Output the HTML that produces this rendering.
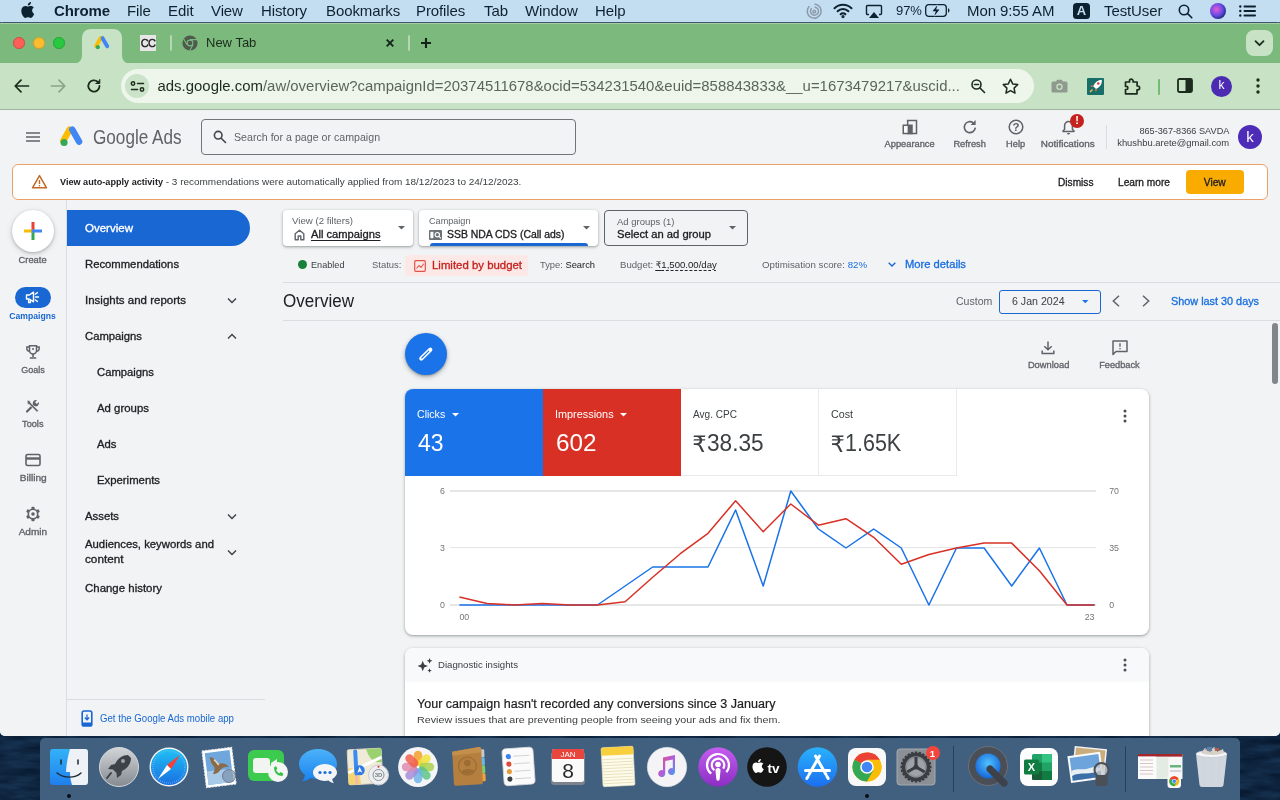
<!DOCTYPE html>
<html><head><meta charset="utf-8"><title>Google Ads</title>
<style>
*{box-sizing:border-box;margin:0;padding:0}
html,body{width:1280px;height:800px;overflow:hidden}
body{font-family:"Liberation Sans",sans-serif;background:#0f2641;position:relative;color:#202124}
.abs{position:absolute}
svg{display:block;position:absolute;overflow:visible}
.t{position:absolute;white-space:nowrap;line-height:1}
#menubar{left:0;top:0;width:1280px;height:22px;background:#c4def1;font-size:15px;color:#0d2231}
#menubar span{position:absolute;top:1px;line-height:20px;white-space:nowrap;letter-spacing:-0.1px}
#win{left:0;top:22px;width:1280px;height:714px;border-radius:3px 3px 5px 5px;overflow:hidden;background:#f1f3f4}
#tabstrip{left:0;top:0;width:1280px;height:42px;background:#7cb97c;box-shadow:inset 0 1px 0 #3f566a,inset 0 2px 0 #a3cfa1}
#toolbar{left:0;top:41px;width:1280px;height:47px;background:#c7e2c4;border-bottom:1px solid #9fb39e}
#page{left:0;top:88px;width:1280px;height:627px;background:#f1f3f4;overflow:hidden}
.g{color:#5f6368}
.b{color:#1a73e8}
.m{font-weight:bold}
#win,#menubar,#dock{will-change:transform}
</style></head><body>
<svg style="left:0;top:730px" width="1280" height="70" viewBox="0 0 1280 70"><filter id="wtr" x="0" y="0" width="100%" height="100%" color-interpolation-filters="sRGB"><feTurbulence type="fractalNoise" baseFrequency="0.03 0.13" numOctaves="3" seed="7"/><feColorMatrix values="0.10 0 0 0 0.010  0.17 0 0 0 0.065  0.22 0 0 0 0.145  0 0 0 0 1"/></filter><rect width="1280" height="70" filter="url(#wtr)"/></svg>
<div id="menubar" class="abs">
<svg style="left:20px;top:1px" width="17" height="18" viewBox="0 0 17 18"><path fill="#0d2231" d="M12.1 9.5c0-2 1.6-2.9 1.7-3-.9-1.400-2.400-1.500-2.900-1.600-1.200-.1-2.400.7-3 .7s-1.600-.7-2.600-.7c-1.300 0-2.600.8-3.300 2-1.400 2.400-.4 6 1 8 .7 1 1.500 2 2.500 2s1.400-.6 2.600-.6 1.500.6 2.600.6 1.800-1 2.400-1.900c.8-1.100 1.100-2.200 1.100-2.200s-2.100-.8-2.100-3.300zM10.200 3.400c.5-.7.900-1.600.8-2.500-.8 0-1.700.5-2.300 1.200-.5.600-.9 1.500-.8 2.400.9.100 1.700-.4 2.300-1.100z"/></svg>
<span style="left:54px;font-weight:bold">Chrome</span>
<span style="left:127px">File</span>
<span style="left:168px">Edit</span>
<span style="left:211px">View</span>
<span style="left:261px">History</span>
<span style="left:326px">Bookmarks</span>
<span style="left:416px">Profiles</span>
<span style="left:484px">Tab</span>
<span style="left:525px">Window</span>
<span style="left:595px">Help</span>
<!-- siri-ish swirl -->
<svg style="left:806px;top:3px" width="16" height="16" viewBox="0 0 16 16" fill="none" stroke="#8a9aa8" stroke-width="1.500" stroke-linecap="round"><path d="M3 3.500A7 7 0 1 0 9 1.200"/><path d="M5.500 5.500A4 4 0 1 0 9 4.200"/><path d="M8 7.300a1.300 1.300 0 1 0 1 .2"/></svg>
<!-- wifi -->
<svg style="left:833px;top:3px" width="20" height="15" viewBox="0 0 20 15" fill="none" stroke="#0d2231" stroke-width="2" stroke-linecap="round"><path d="M1.500 5.200a12 12 0 0 1 17 0"/><path d="M4.600 8.300a7.600 7.600 0 0 1 10.800 0"/><path d="M7.600 11.300a3.400 3.400 0 0 1 4.800 0"/><circle cx="10" cy="13.600" r=".6" fill="#0d2231"/></svg>
<!-- airplay -->
<svg style="left:865px;top:4px" width="18" height="15" viewBox="0 0 18 15"><path d="M4 10.500H2.500a1 1 0 0 1-1-1v-7a1 1 0 0 1 1-1h13a1 1 0 0 1 1 1v7a1 1 0 0 1-1 1H14" fill="none" stroke="#0d2231" stroke-width="1.400"/><path d="M9 8l5 6H4z" fill="#0d2231"/></svg>
<span style="left:896px;font-size:13px;top:1px">97%</span>
<!-- battery -->
<svg style="left:925px;top:4px" width="25" height="13" viewBox="0 0 25 13"><rect x=".7" y=".7" width="20.600" height="11.600" rx="3" fill="none" stroke="#0d2231" stroke-width="1.300"/><path d="M23 4.300v4.400c.9-.3 1.500-1.200 1.500-2.200S23.900 4.600 23 4.300z" fill="#0d2231"/><path d="M12.500 1l-5 6.200h3.300l-1.500 4.800 5.200-6.400h-3.300z" fill="#0d2231" stroke="#c4def1" stroke-width="1.200" paint-order="stroke"/></svg>
<span style="left:967px">Mon 9:55 AM</span>
<div class="abs" style="left:1073px;top:3px;width:17px;height:16px;border-radius:3.500px;background:#0d2231;color:#c4def1;font-size:13px;font-weight:bold;text-align:center;line-height:16px">A</div>
<span style="left:1104px">TestUser</span>
<svg style="left:1178px;top:4px" width="15" height="15" viewBox="0 0 15 15" fill="none" stroke="#0d2231" stroke-width="1.600" stroke-linecap="round"><circle cx="6" cy="6" r="4.700"/><path d="M9.600 9.600l4.200 4.200"/></svg>
<div class="abs" style="left:1210px;top:3px;width:16px;height:16px;border-radius:50%;background:radial-gradient(circle at 40% 40%,#e85bd0 0,#6a4be8 45%,#1b2a7a 75%,#0d1033 100%)"></div>
<svg style="left:1239px;top:5px" width="17" height="12" viewBox="0 0 17 12" fill="#0d2231"><circle cx="1.300" cy="1.500" r="1.200"/><circle cx="1.300" cy="6" r="1.200"/><circle cx="1.300" cy="10.500" r="1.200"/><rect x="4.500" y=".6" width="12.500" height="1.800" rx=".9"/><rect x="4.500" y="5.100" width="12.500" height="1.800" rx=".9"/><rect x="4.500" y="9.600" width="12.500" height="1.800" rx=".9"/></svg>
</div>
<div id="win" class="abs">
<div id="tabstrip" class="abs">
  <div class="abs" style="left:13px;top:15.2px;width:11.6px;height:11.6px;border-radius:50%;background:#fe5f57;border:.5px solid #d8473f"></div>
  <div class="abs" style="left:33.2px;top:15.2px;width:11.6px;height:11.6px;border-radius:50%;background:#febc2e;border:.5px solid #d9a022"></div>
  <div class="abs" style="left:53.2px;top:15.2px;width:11.6px;height:11.6px;border-radius:50%;background:#28c840;border:.5px solid #1fa733"></div>
  <!-- active tab -->
  <svg style="left:72px;top:7px" width="60" height="35" viewBox="0 0 60 35"><path d="M0 35c6 0 10-3 10-9V9c0-5 3-9 9-9h22c6 0 9 4 9 9v17c0 6 4 9 10 9z" fill="#c7e2c4"/></svg>
  <!-- google ads favicon -->
  <svg style="left:94.500px;top:13.700px" width="15.300" height="14.400" viewBox="0 0 17 16"><path d="M6.300 2.200L1.300 11" stroke="#fbbc04" stroke-width="4.400" stroke-linecap="round"/><path d="M8.400 2.400l5.200 9" stroke="#4285f4" stroke-width="4.400" stroke-linecap="round"/><circle cx="3.100" cy="12.400" r="2.300" fill="#34a853"/></svg>
  <div class="abs" style="left:140px;top:13px;width:16px;height:16px;background:#e6e6e6;color:#1a1a1a;font:11px/16px 'Liberation Sans',sans-serif;-webkit-text-stroke:.35px #1a1a1a;text-align:center;letter-spacing:-.8px">CC</div>
  <div class="abs" style="left:170px;top:13px;width:2px;height:16px;background:#b5d6b3;border-radius:1px"></div>
  <!-- chrome grey icon -->
  <svg style="left:182px;top:13px" width="16" height="16" viewBox="0 0 16 16"><circle cx="8" cy="8" r="7.600" fill="#4d5a4d"/><circle cx="8" cy="8" r="3.400" fill="#7cb97c"/><circle cx="8" cy="8" r="2.300" fill="#4d5a4d"/><path d="M8 4.600h7M5 9.700L1.600 3.800M11 9.700l-3.400 6" stroke="#7cb97c" stroke-width="1.100"/></svg>
  <div class="t" style="left:206px;top:14px;font-size:13px;color:#1c2b1c">New Tab</div>
  <svg style="left:386px;top:17px" width="8" height="8" viewBox="0 0 8 8" stroke="#13241a" stroke-width="1.900" stroke-linecap="butt"><path d="M.7 .7l6.600 6.600M7.300 .7L.7 7.300"/></svg>
  <div class="abs" style="left:408px;top:13px;width:2px;height:16px;background:#b5d6b3;border-radius:1px"></div>
  <svg style="left:421px;top:16px" width="10" height="10" viewBox="0 0 10 10" stroke="#13241a" stroke-width="2.100" stroke-linecap="butt"><path d="M5 0v10M0 5h10"/></svg>
  <div class="abs" style="left:1246px;top:8px;width:27px;height:26px;border-radius:8px;background:#c7e2c4"></div>
  <svg style="left:1254px;top:18px" width="11" height="7" viewBox="0 0 11 7" fill="none" stroke="#1c2b1c" stroke-width="1.800" stroke-linecap="round" stroke-linejoin="round"><path d="M1.500 1.200l4 4 4-4"/></svg>
</div>
<div id="toolbar" class="abs">
  <svg style="left:14px;top:16px" width="16" height="14" viewBox="0 0 16 14" fill="none" stroke="#1c2b1c" stroke-width="1.700" stroke-linecap="round" stroke-linejoin="round"><path d="M7 1.200L1.200 7l5.800 5.800M1.500 7h13"/></svg>
  <svg style="left:50px;top:16px" width="16" height="14" viewBox="0 0 16 14" fill="none" stroke="#8aa58a" stroke-width="1.700" stroke-linecap="round" stroke-linejoin="round"><path d="M9 1.200L14.800 7 9 12.800M14.500 7h-13"/></svg>
  <svg style="left:86px;top:15px" width="16" height="16" viewBox="0 0 16 16" fill="none" stroke="#1c2b1c" stroke-width="1.800" stroke-linecap="round"><path d="M13.500 8A5.600 5.600 0 1 1 11.800 4"/><path d="M13.800 1.500v4h-4" fill="#1c2b1c" stroke-linejoin="round" stroke-width="1"/></svg>
  <div class="abs" style="left:120.500px;top:6.200px;width:913.500px;height:33.600px;border-radius:17px;background:#eef6ec"></div>
  <div class="abs" style="left:125.300px;top:11px;width:24px;height:24px;border-radius:50%;background:#cbe3c8"></div>
  <svg style="left:130px;top:17.600px" width="15" height="11" viewBox="0 0 15 11" fill="none" stroke="#1c2b1c" stroke-width="1.500" stroke-linecap="round"><circle cx="3" cy="2.500" r="1.700"/><path d="M7.500 2.500h6"/><circle cx="12" cy="8.500" r="1.700"/><path d="M1.500 8.500h6"/></svg>
  <div class="t" style="left:157.500px;top:16px;font-size:14.900px;color:#5b665b;letter-spacing:.02px"><span style="color:#1c2b1c">ads.google.com</span>/aw/overview?campaignId=20374511678&amp;ocid=534231540&amp;euid=858843833&amp;__u=1673479217&amp;uscid...</div>
  <svg style="left:970px;top:15px" width="16" height="16" viewBox="0 0 16 16" fill="none" stroke="#1c2b1c" stroke-width="1.600" stroke-linecap="round"><circle cx="6.500" cy="6.500" r="4.500"/><path d="M10 10l4.500 4.500M4.500 6.500h4"/></svg>
  <svg style="left:1002px;top:15px" width="17" height="16" viewBox="0 0 17 16" fill="none" stroke="#1c2b1c" stroke-width="1.500" stroke-linejoin="round"><path d="M8.500 1.300l2.200 4.600 5 .7-3.600 3.500.9 5-4.500-2.400L4 15.100l.9-5L1.300 6.600l5-.7z"/></svg>
  <!-- camera -->
  <svg style="left:1051px;top:16px" width="17" height="14" viewBox="0 0 17 14"><path d="M2 2.500h3l1.200-1.700h4.600L12 2.500h3a1.500 1.500 0 0 1 1.500 1.500v8a1.500 1.500 0 0 1-1.500 1.500H2A1.500 1.500 0 0 1 .5 12V4A1.500 1.500 0 0 1 2 2.500z" fill="#8d9a8d"/><circle cx="8.500" cy="7.800" r="3.200" fill="#c7e2c4"/><circle cx="8.500" cy="7.800" r="1.900" fill="#8d9a8d"/></svg>
  <!-- rocket ext -->
  <div class="abs" style="left:1087px;top:15px;width:17px;height:17px;background:#186f69;border-radius:1px;overflow:hidden"><svg style="left:0;top:0" width="17" height="17" viewBox="0 0 17 17"><path d="M14.800 1.800c-3.800 0-6.800 2.200-8.600 6.400l2.800 2.800c4.200-1.800 6.200-5 5.800-9.200z" fill="#fff"/><path d="M6 8.500L3.500 9 5 6.500zM8.500 11L8 13.500l2.500-1.500z" fill="#ff7043"/><path d="M5.500 11.500L3 14" stroke="#ffb74d" stroke-width="1.500"/><circle cx="11.300" cy="5.500" r="1.300" fill="#d23b3b"/></svg></div>
  <!-- puzzle -->
  <svg style="left:1123px;top:14px" width="18" height="18" viewBox="0 0 18 18" fill="none" stroke="#1c2b1c" stroke-width="1.700" stroke-linejoin="round"><path d="M2.500 5h4V4a1.800 1.800 0 0 1 3.600 0v1h4v4h.6a1.900 1.900 0 0 1 0 3.800H14v4H2.500v-4.300h.8a1.600 1.600 0 0 0 0-3.200h-.8z"/></svg>
  <div class="abs" style="left:1158px;top:16px;width:2px;height:16px;background:#74ba70;border-radius:1px"></div>
  <!-- side panel -->
  <svg style="left:1177px;top:15px" width="16" height="15" viewBox="0 0 16 15"><rect x="1" y="1" width="14" height="13" rx="1.500" fill="none" stroke="#1c2b1c" stroke-width="1.800"/><rect x="8.500" y="1" width="6.500" height="13" fill="#1c2b1c"/></svg>
  <div class="abs" style="left:1211px;top:13px;width:21px;height:21px;border-radius:50%;background:#4c2bb3;color:#fff;font-size:12px;text-align:center;line-height:19px">k</div>
  <svg style="left:1256px;top:15px" width="4" height="16" viewBox="0 0 4 16" fill="#1c2b1c"><circle cx="2" cy="2" r="1.700"/><circle cx="2" cy="8" r="1.700"/><circle cx="2" cy="14" r="1.700"/></svg>
</div>
<div id="page" class="abs">
<div class="abs" style="left:0;top:-110px;width:1280px;height:800px">
<svg style="left:26px;top:132px" width="14" height="10" viewBox="0 0 14 10" ><path d="M0 1h14M0 5h14M0 9h14" stroke="#5f6368" stroke-width="1.600"/></svg>
<svg style="left:60px;top:126px" width="24" height="22" viewBox="0 0 24 22" ><path d="M9.600 3.700L3.200 15" stroke="#fbbc04" stroke-width="6.400" stroke-linecap="round"/><path d="M12.300 3.600l6.800 12" stroke="#4285f4" stroke-width="6.400" stroke-linecap="round"/><circle cx="4.100" cy="16.600" r="3.500" fill="#34a853"/></svg>
<div class="t" style="top:126.64px;font-size:20.5px;color:#5f6368;left:93px;transform-origin:0 50%;transform:scaleX(0.836);">Google Ads</div>
<div class="abs" style="left:201px;top:119px;width:374.5px;height:35.5px;border:1.500px solid #70757a;border-radius:4px"></div>
<svg style="left:213px;top:130px" width="14" height="14" viewBox="0 0 14 14" fill="none" stroke="#44474a" stroke-width="1.600" stroke-linecap="round"><circle cx="5.200" cy="5.200" r="3.800"/><path d="M8.200 8.200l4.300 4.300"/></svg>
<div class="t" style="top:132.44px;font-size:10.5px;color:#5f6368;left:234px;transform-origin:0 50%;transform:scaleX(1.013);">Search for a page or campaign</div>
<svg style="left:902px;top:119px" width="16" height="16" viewBox="0 0 16 16" ><rect x="5.650" y="1.500" width="8.850" height="13" fill="none" stroke="#5f6368" stroke-width="1.500"/><rect x="1.250" y="6.250" width="8.750" height="8.250" fill="#f8f9fa" stroke="#5f6368" stroke-width="1.500"/><rect x="5.650" y="6.250" width="4.350" height="8.250" fill="#5f6368"/></svg>
<div class="t" style="top:139.85px;font-size:8.4px;color:#5f6368;-webkit-text-stroke:0.3px #5f6368;left:887.31px;transform-origin:50% 50%;transform:scaleX(1.107);">Appearance</div>
<svg style="left:961.8px;top:119px" width="16" height="16" viewBox="0 0 16 16" ><path d="M13.300 8.700A5.500 5.500 0 1 1 11.200 3.800" fill="none" stroke="#5f6368" stroke-width="1.600"/><path d="M13.600 1v5h-5z" fill="#5f6368"/></svg>
<div class="t" style="top:139.85px;font-size:8.4px;color:#5f6368;-webkit-text-stroke:0.3px #5f6368;left:954.94px;transform-origin:50% 50%;transform:scaleX(1.108);">Refresh</div>
<svg style="left:1008px;top:119px" width="16" height="16" viewBox="0 0 16 16" ><circle cx="8" cy="8" r="6.800" fill="none" stroke="#5f6368" stroke-width="1.500"/></svg>
<div class="t" style="top:121.91px;font-size:11.5px;color:#5f6368;font-weight:bold;left:1012.48px;transform-origin:50% 50%;">?</div>
<div class="t" style="top:139.85px;font-size:8.4px;color:#5f6368;-webkit-text-stroke:0.3px #5f6368;left:1007.08px;transform-origin:50% 50%;transform:scaleX(1.102);">Help</div>
<svg style="left:1061px;top:120px" width="15" height="15" viewBox="0 0 15 15" ><path d="M7.500 1.600a3.900 3.900 0 0 0-3.900 3.900v3.800L2 11v.6h11V11l-1.600-1.700V5.500a3.900 3.900 0 0 0-3.900-3.900z" fill="none" stroke="#5f6368" stroke-width="1.500" stroke-linejoin="round"/><path d="M6 13a1.500 1.500 0 0 0 3 0z" fill="#5f6368"/></svg>
<div class="abs" style="left:1070.2px;top:113.8px;width:13.8px;height:13.8px;border-radius:50%;background:#c5221f"></div>
<div class="t" style="top:115.37px;font-size:11px;color:#fff;font-weight:bold;left:1075.26px;transform-origin:50% 50%;">!</div>
<div class="t" style="top:139.85px;font-size:8.4px;color:#5f6368;-webkit-text-stroke:0.3px #5f6368;left:1045.49px;transform-origin:50% 50%;transform:scaleX(1.184);">Notifications</div>
<div class="abs" style="left:1106px;top:125px;width:1px;height:24px;background:#dadce0"></div>
<div class="t" style="top:127.23px;font-size:9px;color:#3c4043;left:1140.79px;transform-origin:100% 50%;transform:scaleX(1.018);">865-367-8366 SAVDA</div>
<div class="t" style="top:139.23px;font-size:9px;color:#3c4043;left:1122.01px;transform-origin:100% 50%;transform:scaleX(1.045);">khushbu.arete@gmail.com</div>
<div class="abs" style="left:1238px;top:125px;width:24px;height:24px;border-radius:50%;background:#4d2db7"></div>
<div class="t" style="top:129.35px;font-size:15px;color:#fff;left:1246.25px;transform-origin:50% 50%;">k</div>
<div class="abs" style="left:12px;top:164px;width:1255.5px;height:35.5px;background:#fff;border:1px solid #e9a16c;border-radius:6px"></div>
<svg style="left:31px;top:174px" width="17" height="15" viewBox="0 0 17 15" ><path d="M8.500 1.600l7 12.200h-14z" fill="none" stroke="#c26a25" stroke-width="1.500" stroke-linejoin="round"/><path d="M8.500 6v4" stroke="#c26a25" stroke-width="1.400"/><circle cx="8.500" cy="11.700" r=".8" fill="#c26a25"/></svg>
<div class="t" style="top:177.73px;font-size:9px;color:#202124;font-weight:bold;left:60px;transform-origin:0 50%;transform:scaleX(1.011);">View auto-apply activity</div>
<div class="t" style="top:177.73px;font-size:9px;color:#3c4043;left:163px;transform-origin:0 50%;transform:scaleX(1.107);white-space:pre;"> - 3 recommendations were automatically applied from 18/12/2023 to 24/12/2023.</div>
<div class="t" style="top:177.7px;font-size:10px;color:#202124;-webkit-text-stroke:0.3px #202124;left:1058px;transform-origin:0 50%;transform:scaleX(1.014);">Dismiss</div>
<div class="t" style="top:177.7px;font-size:10px;color:#202124;-webkit-text-stroke:0.3px #202124;left:1118px;transform-origin:0 50%;transform:scaleX(1.017);">Learn more</div>
<div class="abs" style="left:1186px;top:170.3px;width:58px;height:23.7px;background:#f9ab00;border-radius:4px"></div>
<div class="t" style="top:177.8px;font-size:10px;color:#202124;-webkit-text-stroke:0.3px #202124;left:1204.25px;transform-origin:50% 50%;transform:scaleX(1.023);">View</div>
<div class="abs" style="left:66px;top:200px;width:1px;height:537px;background:#dadce0"></div>
<div class="abs" style="left:12px;top:210px;width:42px;height:42px;border-radius:50%;background:#fff;box-shadow:0 1px 3px rgba(60,64,67,.3),0 2px 6px rgba(60,64,67,.15)"></div>
<svg style="left:24.3px;top:222.4px" width="18" height="18" viewBox="0 0 18 18" ><path d="M9 0v9" stroke="#ea4335" stroke-width="3"/><path d="M9 9v9" stroke="#34a853" stroke-width="3"/><path d="M0 9h9" stroke="#fbbc04" stroke-width="3"/><path d="M9 9h9" stroke="#4285f4" stroke-width="3"/><rect x="7.500" y="7.500" width="3" height="3" fill="#4285f4"/></svg>
<div class="t" style="top:255.85px;font-size:8.4px;color:#5f6368;-webkit-text-stroke:0.3px #5f6368;left:20.43px;transform-origin:50% 50%;transform:scaleX(1.114);">Create</div>
<div class="abs" style="left:15px;top:286.8px;width:36px;height:20.8px;border-radius:11px;background:#1967d2"></div>
<svg style="left:25px;top:290.2px" width="16" height="14" viewBox="0 0 16 14" ><path d="M1.500 5h2.800l4.200-2.800v9.600L4.300 9H1.500z" fill="none" stroke="#fff" stroke-width="1.400" stroke-linejoin="round"/><path d="M3.600 9.300v3.200h1.800V9.800" fill="none" stroke="#fff" stroke-width="1.300"/><path d="M10.500 7h3M10.200 4.200l2.200-1.600M10.200 9.800l2.200 1.600" stroke="#fff" stroke-width="1.400" stroke-linecap="round"/></svg>
<div class="t" style="top:312.25px;font-size:8.4px;color:#1967d2;font-weight:bold;left:10.42px;transform-origin:50% 50%;transform:scaleX(1.030);">Campaigns</div>
<svg style="left:25px;top:344px" width="16" height="16" viewBox="0 0 16 16" ><path d="M4.500 1.700h7v4.800a3.500 3.500 0 0 1-7 0z" fill="none" stroke="#5f6368" stroke-width="1.500"/><path d="M4.500 3H1.800v1.500a2.700 2.700 0 0 0 2.700 2.700M11.500 3h2.700v1.500a2.700 2.700 0 0 1-2.700 2.700" fill="none" stroke="#5f6368" stroke-width="1.400"/><path d="M8 10v3M4.800 14h6.400" stroke="#5f6368" stroke-width="1.600"/><circle cx="8" cy="5" r="1" fill="#5f6368"/></svg>
<div class="t" style="top:366.25px;font-size:8.4px;color:#5f6368;-webkit-text-stroke:0.3px #5f6368;left:22.05px;transform-origin:50% 50%;transform:scaleX(1.074);">Goals</div>
<svg style="left:25px;top:398px" width="16" height="16" viewBox="0 0 16 16" ><path d="M2 13.500l6.500-6.500" stroke="#5f6368" stroke-width="2.200" stroke-linecap="round"/><path d="M8 6.500a3.200 3.200 0 0 1 4-4.300L10 4.200l1.800 1.800 2-2A3.200 3.200 0 0 1 9.500 8z" fill="#5f6368"/><path d="M2.200 2l3 1 .6 2 7.700 7.700-1.500 1.500L4.300 6.500l-2-.6z" fill="#5f6368" stroke="#f1f3f4" stroke-width=".7"/></svg>
<div class="t" style="top:420.25px;font-size:8.4px;color:#5f6368;-webkit-text-stroke:0.3px #5f6368;left:23.22px;transform-origin:50% 50%;transform:scaleX(1.099);">Tools</div>
<svg style="left:25px;top:453px" width="16" height="14" viewBox="0 0 16 14" ><rect x="1" y="1.500" width="14" height="11" rx="1.500" fill="none" stroke="#5f6368" stroke-width="1.600"/><path d="M1 5.500h14" stroke="#5f6368" stroke-width="2.400"/></svg>
<div class="t" style="top:474.25px;font-size:8.4px;color:#5f6368;-webkit-text-stroke:0.3px #5f6368;left:21.82px;transform-origin:50% 50%;transform:scaleX(1.208);">Billing</div>
<svg style="left:25px;top:506px" width="16" height="16" viewBox="0 0 16 16" ><rect x="6.400" y="0.800" width="3.200" height="3.400" rx="1" fill="#5f6368" transform="rotate(0 8 8)"/><rect x="6.400" y="0.800" width="3.200" height="3.400" rx="1" fill="#5f6368" transform="rotate(60 8 8)"/><rect x="6.400" y="0.800" width="3.200" height="3.400" rx="1" fill="#5f6368" transform="rotate(120 8 8)"/><rect x="6.400" y="0.800" width="3.200" height="3.400" rx="1" fill="#5f6368" transform="rotate(180 8 8)"/><rect x="6.400" y="0.800" width="3.200" height="3.400" rx="1" fill="#5f6368" transform="rotate(240 8 8)"/><rect x="6.400" y="0.800" width="3.200" height="3.400" rx="1" fill="#5f6368" transform="rotate(300 8 8)"/><circle cx="8" cy="8" r="4.700" fill="#f1f3f4" stroke="#5f6368" stroke-width="1.600"/><circle cx="8" cy="8" r="1.800" fill="#5f6368"/></svg>
<div class="t" style="top:528.25px;font-size:8.4px;color:#5f6368;-webkit-text-stroke:0.3px #5f6368;left:21.12px;transform-origin:50% 50%;transform:scaleX(1.200);">Admin</div>
<div class="abs" style="left:67px;top:210px;width:183px;height:36px;background:#1967d2;border-radius:0 18px 18px 0"></div>
<div class="t" style="top:223.44px;font-size:10.5px;color:#fff;-webkit-text-stroke:0.3px #fff;left:85px;transform-origin:0 50%;transform:scaleX(1.097);">Overview</div>
<div class="t" style="top:259.44px;font-size:10.5px;color:#202124;-webkit-text-stroke:0.3px #202124;left:85px;transform-origin:0 50%;transform:scaleX(1.074);">Recommendations</div>
<div class="t" style="top:295.44px;font-size:10.5px;color:#202124;-webkit-text-stroke:0.3px #202124;left:85px;transform-origin:0 50%;transform:scaleX(1.095);">Insights and reports</div>
<div class="t" style="top:331.44px;font-size:10.5px;color:#202124;-webkit-text-stroke:0.3px #202124;left:85px;transform-origin:0 50%;transform:scaleX(1.073);">Campaigns</div>
<div class="t" style="top:367.44px;font-size:10.5px;color:#202124;-webkit-text-stroke:0.3px #202124;left:97px;transform-origin:0 50%;transform:scaleX(1.073);">Campaigns</div>
<div class="t" style="top:403.44px;font-size:10.5px;color:#202124;-webkit-text-stroke:0.3px #202124;left:97px;transform-origin:0 50%;transform:scaleX(1.086);">Ad groups</div>
<div class="t" style="top:439.44px;font-size:10.5px;color:#202124;-webkit-text-stroke:0.3px #202124;left:97px;transform-origin:0 50%;transform:scaleX(1.078);">Ads</div>
<div class="t" style="top:475.44px;font-size:10.5px;color:#202124;-webkit-text-stroke:0.3px #202124;left:97px;transform-origin:0 50%;transform:scaleX(1.080);">Experiments</div>
<div class="t" style="top:511.43px;font-size:10.5px;color:#202124;-webkit-text-stroke:0.3px #202124;left:85px;transform-origin:0 50%;transform:scaleX(1.079);">Assets</div>
<div class="t" style="top:539.43px;font-size:10.5px;color:#202124;-webkit-text-stroke:0.3px #202124;left:85px;transform-origin:0 50%;transform:scaleX(1.078);">Audiences, keywords and</div>
<div class="t" style="top:554.43px;font-size:10.5px;color:#202124;-webkit-text-stroke:0.3px #202124;left:85px;transform-origin:0 50%;transform:scaleX(1.117);">content</div>
<div class="t" style="top:583.43px;font-size:10.5px;color:#202124;-webkit-text-stroke:0.3px #202124;left:85px;transform-origin:0 50%;transform:scaleX(1.090);">Change history</div>
<svg style="left:227px;top:296.5px" width="10" height="7" viewBox="0 0 10 7" ><path d="M1 1.500l4 4 4-4" fill="none" stroke="#3c4043" stroke-width="1.400"/></svg>
<svg style="left:227px;top:332.5px" width="10" height="7" viewBox="0 0 10 7" ><path d="M1 5.500l4-4 4 4" fill="none" stroke="#3c4043" stroke-width="1.400"/></svg>
<svg style="left:227px;top:512.5px" width="10" height="7" viewBox="0 0 10 7" ><path d="M1 1.500l4 4 4-4" fill="none" stroke="#3c4043" stroke-width="1.400"/></svg>
<svg style="left:227px;top:548.5px" width="10" height="7" viewBox="0 0 10 7" ><path d="M1 1.500l4 4 4-4" fill="none" stroke="#3c4043" stroke-width="1.400"/></svg>
<div class="abs" style="left:67px;top:699px;width:198px;height:1px;background:#dadce0"></div>
<svg style="left:81px;top:710px" width="12" height="17" viewBox="0 0 12 17" ><rect x="1.200" y="1" width="9.600" height="15" rx="1.800" fill="none" stroke="#1967d2" stroke-width="1.600"/><path d="M6 4.500v5M3.800 7.500L6 9.800l2.200-2.300" fill="none" stroke="#1967d2" stroke-width="1.300"/><path d="M1.200 12.500h9.600v2a1.500 1.500 0 0 1-1.500 1.500H2.700a1.500 1.500 0 0 1-1.500-1.500z" fill="#1967d2"/></svg>
<div class="t" style="top:714.1px;font-size:10px;color:#1967d2;left:100px;transform-origin:0 50%;transform:scaleX(0.964);">Get the Google Ads mobile app</div>
<div class="abs" style="left:283px;top:210px;width:130px;height:36px;background:#fff;border-radius:4px;box-shadow:0 1px 2px rgba(60,64,67,.3),0 1px 3px 1px rgba(60,64,67,.15);"></div>
<div class="t" style="top:217.25px;font-size:8.4px;color:#5f6368;left:292px;transform-origin:0 50%;transform:scaleX(1.153);">View (2 filters)</div>
<svg style="left:293.7px;top:228.7px" width="11" height="12" viewBox="0 0 11 12" ><path d="M1.200 10.800V4.800L5.500 1.300l4.300 3.500v6h-3V7h-2.600v3.800z" fill="none" stroke="#5f6368" stroke-width="1.400" stroke-linejoin="round"/></svg>
<div class="t" style="top:229.6px;font-size:10px;color:#202124;-webkit-text-stroke:0.3px #202124;left:310.5px;transform-origin:0 50%;transform:scaleX(1.116);text-decoration:underline;text-underline-offset:2px;">All campaigns</div>
<svg style="left:397.7px;top:226.45px" width="7" height="3.5" viewBox="0 0 7 3.5" ><path d="M0 0h7L3.5 3.5z" fill="#5f6368"/></svg>
<div class="abs" style="left:419px;top:210px;width:179px;height:36px;background:#fff;border-radius:4px;box-shadow:0 1px 2px rgba(60,64,67,.3),0 1px 3px 1px rgba(60,64,67,.15);"></div>
<div class="t" style="top:217.25px;font-size:8.4px;color:#5f6368;left:428.5px;transform-origin:0 50%;transform:scaleX(1.087);">Campaign</div>
<svg style="left:429px;top:229.5px" width="13" height="10" viewBox="0 0 13 10" ><rect x="0" y="0" width="13" height="10" rx="1" fill="#6b7075"/><rect x="1.400" y="1.800" width="3" height="6.400" fill="#fff"/><circle cx="8.300" cy="4.700" r="2.200" fill="none" stroke="#fff" stroke-width="1.200"/><path d="M9.900 6.400l2 2" stroke="#fff" stroke-width="1.200"/></svg>
<div class="t" style="top:229.6px;font-size:10px;color:#202124;-webkit-text-stroke:0.3px #202124;left:447px;transform-origin:0 50%;transform:scaleX(1.042);">SSB NDA CDS (Call ads)</div>
<div class="abs" style="left:430px;top:243px;width:157.5px;height:3px;background:#1967d2;border-radius:3px 3px 0 0"></div>
<svg style="left:582.5px;top:226.45px" width="7" height="3.5" viewBox="0 0 7 3.5" ><path d="M0 0h7L3.5 3.5z" fill="#5f6368"/></svg>
<div class="abs" style="left:604px;top:210.3px;width:144px;height:35.4px;border:1px solid #5f6368;border-radius:4px"></div>
<div class="t" style="top:218.35px;font-size:8.4px;color:#5f6368;left:617px;transform-origin:0 50%;transform:scaleX(1.133);">Ad groups (1)</div>
<div class="t" style="top:230.2px;font-size:10px;color:#202124;-webkit-text-stroke:0.3px #202124;left:617px;transform-origin:0 50%;transform:scaleX(1.120);">Select an ad group</div>
<svg style="left:729px;top:226.45px" width="7" height="3.5" viewBox="0 0 7 3.5" ><path d="M0 0h7L3.5 3.5z" fill="#5f6368"/></svg>
<div class="abs" style="left:297.7px;top:260.2px;width:9px;height:9px;border-radius:50%;background:#188038"></div>
<div class="t" style="top:260.31px;font-size:9.8px;color:#3c4043;left:310.5px;transform-origin:0 50%;transform:scaleX(0.931);">Enabled</div>
<div class="t" style="top:260.31px;font-size:9.8px;color:#5f6368;left:371.5px;transform-origin:0 50%;transform:scaleX(0.967);">Status:</div>
<div class="abs" style="left:404.5px;top:254.5px;width:123.5px;height:21.5px;background:#fce8e6;border-radius:3px"></div>
<svg style="left:414px;top:259.5px" width="12" height="12" viewBox="0 0 12 12" ><rect x=".7" y=".7" width="10.600" height="10.600" rx="1" fill="none" stroke="#e25347" stroke-width="1.200"/><path d="M2.500 8.500l2.500-3 2 2 2.700-3.700" fill="none" stroke="#e25347" stroke-width="1.100"/></svg>
<div class="t" style="top:259.94px;font-size:10.5px;color:#c5221f;-webkit-text-stroke:0.3px #c5221f;left:431.7px;transform-origin:0 50%;transform:scaleX(1.086);">Limited by budget</div>
<div class="t" style="top:260.31px;font-size:9.8px;color:#5f6368;left:540px;transform-origin:0 50%;transform:scaleX(0.953);">Type: <span style="color:#202124">Search</span></div>
<div class="t" style="top:260.31px;font-size:9.8px;color:#5f6368;left:619.5px;transform-origin:0 50%;transform:scaleX(0.979);">Budget: <span style="color:#202124;text-decoration:underline dashed;text-underline-offset:2px"><span style="font-family:DejaVu Sans,sans-serif;font-size:9px">₹</span>1,500.00/day</span></div>
<div class="t" style="top:260.31px;font-size:9.8px;color:#5f6368;left:762px;transform-origin:0 50%;transform:scaleX(0.989);">Optimisation score: <span style="color:#1a6ee0">82%</span></div>
<svg style="left:888px;top:262px" width="8" height="5.5" viewBox="0 0 8 5.500" ><path d="M.7 .7L4 4l3.300-3.300" fill="none" stroke="#1967d2" stroke-width="1.400"/></svg>
<div class="t" style="top:259.13px;font-size:10.5px;color:#1a6ee0;-webkit-text-stroke:0.3px #1a6ee0;left:904.7px;transform-origin:0 50%;transform:scaleX(1.066);">More details</div>
<div class="abs" style="left:283px;top:282px;width:997px;height:1px;background:#dadce0"></div>
<div class="t" style="top:292.26px;font-size:18px;color:#202124;left:283px;transform-origin:0 50%;transform:scaleX(0.946);">Overview</div>
<div class="t" style="top:296.59px;font-size:10.2px;color:#5f6368;left:956px;transform-origin:0 50%;transform:scaleX(1.034);">Custom</div>
<div class="abs" style="left:999px;top:289.5px;width:102px;height:24px;border:1px solid #1967d2;border-radius:3px;"></div>
<div class="t" style="top:296.59px;font-size:10.2px;color:#3c4043;left:1011.7px;transform-origin:0 50%;transform:scaleX(1.043);">6 Jan 2024</div>
<svg style="left:1082.25px;top:300.35px" width="6.5" height="3.3" viewBox="0 0 6.5 3.3" ><path d="M0 0h6.5L3.25 3.3z" fill="#1a73e8"/></svg>
<svg style="left:1112px;top:295px" width="8" height="12" viewBox="0 0 8 12" ><path d="M7 .8L1.300 6 7 11.200" fill="none" stroke="#5f6368" stroke-width="1.500"/></svg>
<svg style="left:1142px;top:295px" width="8" height="12" viewBox="0 0 8 12" ><path d="M1 .8L6.700 6 1 11.200" fill="none" stroke="#5f6368" stroke-width="1.500"/></svg>
<div class="t" style="top:296.44px;font-size:10.5px;color:#1a6ee0;-webkit-text-stroke:0.3px #1a6ee0;left:1170.5px;transform-origin:0 50%;transform:scaleX(1.033);">Show last 30 days</div>
<div class="abs" style="left:283px;top:320px;width:997px;height:1px;background:#dadce0"></div>
<div class="abs" style="left:1272px;top:322.5px;width:6px;height:61.5px;background:#80868b;border-radius:3px"></div>
<div class="abs" style="left:405px;top:333px;width:42px;height:42px;border-radius:50%;background:#1a73e8;box-shadow:0 2px 5px rgba(60,64,67,.35),0 1px 2px rgba(60,64,67,.3)"></div>
<svg style="left:418px;top:346px" width="16" height="16" viewBox="0 0 16 16" ><path d="M3.300 12.500L12.300 3.700" stroke="#fff" stroke-width="4.200" stroke-linecap="round"/><path d="M3.800 12L10.800 5.200" stroke="#1a73e8" stroke-width="1.100" stroke-linecap="round"/></svg>
<svg style="left:1041px;top:341px" width="14" height="14" viewBox="0 0 14 14" ><path d="M7 .5v8M3.300 5.200L7 8.800l3.700-3.600" fill="none" stroke="#5f6368" stroke-width="1.500"/><path d="M1.200 9.500v3h11.600v-3" fill="none" stroke="#5f6368" stroke-width="1.500"/></svg>
<div class="t" style="top:361.25px;font-size:8.4px;color:#5f6368;-webkit-text-stroke:0.3px #5f6368;left:1029.67px;transform-origin:50% 50%;transform:scaleX(1.114);">Download</div>
<svg style="left:1112px;top:340px" width="16" height="16" viewBox="0 0 16 16" ><path d="M1 1h14v10.500H4L1 14.500z" fill="none" stroke="#5f6368" stroke-width="1.500" stroke-linejoin="round"/><path d="M8 3.300v3.500" stroke="#5f6368" stroke-width="1.400"/><circle cx="8" cy="8.700" r=".8" fill="#5f6368"/></svg>
<div class="t" style="top:361.25px;font-size:8.4px;color:#5f6368;-webkit-text-stroke:0.3px #5f6368;left:1101.11px;transform-origin:50% 50%;transform:scaleX(1.101);">Feedback</div>
<div class="abs" style="left:405px;top:389px;width:744px;height:246px;background:#fff;border-radius:8px;box-shadow:0 1px 2px rgba(60,64,67,.3),0 1px 3px 1px rgba(60,64,67,.15);"></div>
<div class="abs" style="left:405px;top:389px;width:138px;height:87px;background:#1a73e8;border-radius:8px 0 0 0"></div>
<div class="abs" style="left:543px;top:389px;width:138px;height:87px;background:#d93025"></div>
<div class="abs" style="left:817.5px;top:389px;width:1px;height:87px;background:#e8eaed"></div>
<div class="abs" style="left:956px;top:389px;width:1px;height:87px;background:#e8eaed"></div>
<div class="abs" style="left:681px;top:475px;width:276px;height:1px;background:#e8eaed"></div>
<div class="t" style="top:409.13px;font-size:10.5px;color:#fff;left:417.2px;transform-origin:0 50%;transform:scaleX(1.007);">Clicks</div>
<svg style="left:451.5px;top:413.25px" width="7" height="3.5" viewBox="0 0 7 3.5" ><path d="M0 0h7L3.5 3.5z" fill="#fff"/></svg>
<div class="t" style="top:432.14px;font-size:23.7px;color:#fff;left:417.7px;transform-origin:0 50%;transform:scaleX(0.967);">43</div>
<div class="t" style="top:409.13px;font-size:10.5px;color:#fff;left:555.3px;transform-origin:0 50%;transform:scaleX(1.035);">Impressions</div>
<svg style="left:619.7px;top:413.25px" width="7" height="3.5" viewBox="0 0 7 3.5" ><path d="M0 0h7L3.5 3.5z" fill="#fff"/></svg>
<div class="t" style="top:432.14px;font-size:23.7px;color:#fff;left:555.5px;transform-origin:0 50%;transform:scaleX(1.025);">602</div>
<div class="t" style="top:409.13px;font-size:10.5px;color:#3c4043;left:693px;transform-origin:0 50%;transform:scaleX(0.958);">Avg. CPC</div>
<div class="t" style="top:432.77px;font-size:22.5px;color:#3c4043;left:692.3px;transform-origin:0 50%;"><span style="font-family:DejaVu Sans,sans-serif">₹</span></div>
<div class="t" style="top:432.14px;font-size:23.7px;color:#3c4043;left:707.3px;transform-origin:0 50%;transform:scaleX(0.956);">38.35</div>
<div class="t" style="top:409.13px;font-size:10.5px;color:#3c4043;left:831px;transform-origin:0 50%;transform:scaleX(1.019);">Cost</div>
<div class="t" style="top:432.77px;font-size:22.5px;color:#3c4043;left:830.6px;transform-origin:0 50%;"><span style="font-family:DejaVu Sans,sans-serif">₹</span></div>
<div class="t" style="top:432.14px;font-size:23.7px;color:#3c4043;left:844.6px;transform-origin:0 50%;transform:scaleX(0.908);">1.65K</div>
<svg style="left:1123px;top:409px" width="4" height="14" viewBox="0 0 4 14" fill="#4a4d51"><circle cx="2" cy="2" r="1.500"/><circle cx="2" cy="7" r="1.500"/><circle cx="2" cy="12" r="1.500"/></svg>
<div class="abs" style="left:450px;top:490.25px;width:646px;height:1.5px;background:#e4e6e8"></div>
<div class="abs" style="left:450px;top:546.75px;width:646px;height:1.5px;background:#e4e6e8"></div>
<div class="abs" style="left:450px;top:604.25px;width:646px;height:1.5px;background:#e4e6e8"></div>
<div class="t" style="top:487.04px;font-size:8.8px;color:#757575;left:439.89px;transform-origin:100% 50%;">6</div>
<div class="t" style="top:543.54px;font-size:8.8px;color:#757575;left:439.89px;transform-origin:100% 50%;">3</div>
<div class="t" style="top:601.04px;font-size:8.8px;color:#757575;left:439.89px;transform-origin:100% 50%;">0</div>
<div class="t" style="top:487.04px;font-size:8.8px;color:#757575;left:1109.2px;transform-origin:0 50%;">70</div>
<div class="t" style="top:543.54px;font-size:8.8px;color:#757575;left:1109.2px;transform-origin:0 50%;">35</div>
<div class="t" style="top:601.04px;font-size:8.8px;color:#757575;left:1109.2px;transform-origin:0 50%;">0</div>
<div class="t" style="top:613.04px;font-size:8.8px;color:#757575;left:459.4px;transform-origin:0 50%;">00</div>
<div class="t" style="top:613.04px;font-size:8.8px;color:#757575;left:1084.7px;transform-origin:100% 50%;">23</div>
<svg style="left:0;top:0" width="1280" height="800" viewBox="0 0 1280 800" fill="none" stroke-width="1.500" stroke-linejoin="round"><polyline points="459.4,605.0 487.0,605.0 514.6,605.0 542.3,605.0 569.9,605.0 597.5,605.0 625.1,586.0 652.7,567.0 680.3,567.0 708.0,567.0 735.6,510.0 763.2,586.0 790.8,491.0 818.4,529.0 846.0,548.0 873.7,529.0 901.3,548.0 928.9,605.0 956.5,548.0 984.1,548.0 1011.7,586.0 1039.4,548.0 1067.0,605.0 1094.6,605.0" stroke="#1a73e8"/><polyline points="459.4,596.9 487.0,603.4 514.6,605.0 542.3,603.4 569.9,605.0 597.5,605.0 625.1,601.7 652.7,577.3 680.3,553.7 708.0,533.3 735.6,500.8 763.2,531.7 790.8,504.0 818.4,525.2 846.0,518.7 873.7,537.3 901.3,564.3 928.9,554.5 956.5,548.0 984.1,543.1 1011.7,543.1 1039.4,570.8 1067.0,605.0 1094.6,605.0" stroke="#d93025"/></svg>
<div class="abs" style="left:405px;top:647.5px;width:744px;height:112.5px;background:#fff;border-radius:8px;box-shadow:0 1px 2px rgba(60,64,67,.3),0 1px 3px 1px rgba(60,64,67,.15);"></div>
<div class="abs" style="left:405px;top:647.5px;width:744px;height:34.5px;background:#f8f9fa;border-radius:8px 8px 0 0"></div>
<svg style="left:417px;top:657.5px" width="16" height="16" viewBox="0 0 14 14" ><path d="M5 2.500l1.300 3.200L9.500 7 6.300 8.300 5 11.500 3.700 8.300.5 7l3.200-1.300z" fill="#3c4043"/><path d="M11 0l.7 1.800 1.800.7-1.800.7L11 5l-.7-1.800-1.800-.7 1.800-.7zM11 9l.6 1.400 1.400.6-1.400.6L11 13l-.6-1.400L9 11l1.400-.6z" fill="#3c4043"/></svg>
<div class="t" style="top:660.93px;font-size:9px;color:#3c4043;left:438px;transform-origin:0 50%;transform:scaleX(1.066);">Diagnostic insights</div>
<svg style="left:1123px;top:658px" width="4" height="14" viewBox="0 0 4 14" fill="#4a4d51"><circle cx="2" cy="2" r="1.500"/><circle cx="2" cy="7" r="1.500"/><circle cx="2" cy="12" r="1.500"/></svg>
<div class="t" style="top:697.58px;font-size:12.5px;color:#202124;-webkit-text-stroke:0.2px #202124;left:417px;transform-origin:0 50%;transform:scaleX(1.004);">Your campaign hasn&#x27;t recorded any conversions since 3 January</div>
<div class="t" style="top:716.43px;font-size:9px;color:#3c4043;left:417px;transform-origin:0 50%;transform:scaleX(1.191);">Review issues that are preventing people from seeing your ads and fix them.</div>
</div><!-- screen-coords wrapper -->
</div><!-- page -->
</div><!-- win -->
<div id="dock" class="abs" style="left:0;top:730px;width:1280px;height:70px;overflow:hidden;pointer-events:none"><div class="abs" style="left:0;top:-730px;width:1280px;height:800px">
<div class="abs" style="left:40px;top:738px;width:1200px;height:72px;background:#415f7e;border-radius:5px"></div>
<svg style="left:50px;top:749px" width="38" height="36" viewBox="0 0 38 36" ><defs><linearGradient id="fg1" x1="0" y1="0" x2="0" y2="1"><stop offset="0" stop-color="#33b2f8"/><stop offset="1" stop-color="#1f7fee"/></linearGradient></defs><rect width="38" height="36" rx="3" fill="url(#fg1)"/><path d="M20 0h15a3 3 0 0 1 3 3v30a3 3 0 0 1-3 3H22c-1.500-5-2-9-2-13h-4c.5-9 2-16 4-23z" fill="#eef1f5"/><path d="M11 11v4M28 11v4" stroke="#1d2733" stroke-width="1.500" stroke-linecap="round"/><path d="M7 24c7 5.500 18 5.500 24 0" fill="none" stroke="#1d2733" stroke-width="1.400" stroke-linecap="round"/></svg>
<svg style="left:99px;top:747px" width="40" height="40" viewBox="0 0 40 40" ><defs><linearGradient id="lp" x1="0" y1="0" x2="0" y2="1"><stop offset="0" stop-color="#d2d5d8"/><stop offset="1" stop-color="#858a90"/></linearGradient></defs><circle cx="20" cy="20" r="19.500" fill="url(#lp)" stroke="#d5d8db" stroke-width="1"/><path d="M29 8c-5 0-10 3-13 9l-4 1-3 4 5 .5 3.500 3.500.5 5 4-3 1-4c6-3 9-8 9-13z" fill="#3d4248"/><circle cx="24" cy="14" r="2" fill="#9da3a9"/><path d="M12 26l-4 5" stroke="#3d4248" stroke-width="2" stroke-linecap="round"/></svg>
<svg style="left:149px;top:747px" width="40" height="40" viewBox="0 0 40 40" ><defs><linearGradient id="sf" x1="0" y1="0" x2="0" y2="1"><stop offset="0" stop-color="#1fc0f5"/><stop offset="1" stop-color="#1a6fe0"/></linearGradient></defs><circle cx="20" cy="20" r="19.500" fill="#f1f3f5"/><circle cx="20" cy="20" r="18.100" fill="url(#sf)"/><circle cx="20" cy="20" r="16" fill="none" stroke="#9fd4fb" stroke-width="1.600" stroke-dasharray=".5 1.600" opacity=".8"/><path d="M31 8L18 18l4 4z" fill="#ff3b30"/><path d="M9 32l13-10-4-4z" fill="#fff"/></svg>
<svg style="left:201px;top:746px" width="37" height="42" viewBox="0 0 37 42" ><g transform="rotate(-7 18 21)"><rect x="3" y="3" width="30" height="37" fill="#fff" stroke="#e8eaed" stroke-width="1" stroke-dasharray="2 1.200"/><rect x="5.500" y="5.500" width="25" height="32" fill="#6fa6dc"/><rect x="5.500" y="24" width="25" height="13.500" fill="#a9c9e8"/><path d="M10 10c4 1 6 4 8 8 3-1 7 0 10 4-4-1-7 0-9 2-2 3-5 4-8 3 2-2 3-4 2-7-2-3-3-6-3-10z" fill="#8a6a48"/><path d="M14 13c2 2 3 4 4 6" stroke="#e9dcc6" stroke-width="1.500"/></g><circle cx="28" cy="30" r="6.500" fill="#6d7f97" fill-opacity=".55" stroke="#5d6e85" stroke-width=".8"/></svg>
<svg style="left:248px;top:750px" width="40" height="33" viewBox="0 0 40 33" ><rect x="0" y="0" width="36" height="31" rx="6" fill="#3ccb4e"/><rect x="5" y="8" width="17" height="15" rx="3" fill="#f2f4f2"/><path d="M23 13l6-4v14l-6-4z" fill="#f2f4f2"/><circle cx="30" cy="22" r="10" fill="#f4f6f4"/><path d="M26 17.500c0 5 3.500 8.500 8.500 8.500l.8-2.600-2.600-1.300-1.300 1.200c-1.500-.7-2.600-1.800-3.300-3.300l1.200-1.300-1.300-2.600z" fill="#34c24a"/></svg>
<svg style="left:298px;top:748px" width="40" height="38" viewBox="0 0 40 38" ><defs><linearGradient id="ms" x1="0" y1="0" x2="0" y2="1"><stop offset="0" stop-color="#4cb2fa"/><stop offset="1" stop-color="#1a82ee"/></linearGradient></defs><path d="M20 1C9.500 1 1 7.700 1 16c0 4.300 2.300 8.200 6 11-.3 2.500-1.500 4.800-3 6.500 3.500-.3 6.500-1.700 8.800-3.500 2.200.7 4.600 1 7.200 1 10.500 0 19-6.700 19-15S30.500 1 20 1z" fill="url(#ms)"/><path d="M27 16c-6.600 0-12 3.800-12 8.500S20.400 33 27 33c1.200 0 2.400-.1 3.500-.4 1.500 1.300 3.400 2.200 5.500 2.600-.9-1.200-1.600-2.700-1.800-4.300 2.900-1.500 4.800-3.800 4.800-6.400 0-4.700-5.400-8.500-12-8.500z" fill="#f3f5f7"/><circle cx="22" cy="24.500" r="1.600" fill="#1f6fd6"/><circle cx="27" cy="24.500" r="1.600" fill="#1f6fd6"/><circle cx="32" cy="24.500" r="1.600" fill="#1f6fd6"/></svg>
<svg style="left:347px;top:748px" width="42" height="38" viewBox="0 0 42 38" ><g transform="rotate(-3 18 18)"><rect x="1" y="1" width="34" height="35" rx="2" fill="#f0ead8" stroke="#dcd6c4"/><path d="M20 1h15v14c-8 1-13-5-15-14z" fill="#9bd26f"/><path d="M1 20c8-2 12 4 12 16H1z" fill="#f6d56a"/><path d="M9 1v35" stroke="#f2b7b7" stroke-width="3"/><path d="M1 24L35 10" stroke="#fff" stroke-width="3"/><path d="M9 3v22" stroke="#3b8cf0" stroke-width="4" stroke-linecap="round"/><circle cx="12.500" cy="22" r="5" fill="#2f7be6"/><path d="M12.500 18.500l2.500 6-2.500-1.500-2.500 1.500z" fill="#fff"/></g><circle cx="31.500" cy="27" r="10" fill="#eceef0" stroke="#c9ccd0" stroke-width="1"/><circle cx="31.500" cy="27" r="5.500" fill="none" stroke="#8d9299" stroke-width="1"/><circle cx="31.500" cy="18.800" r="1" fill="#e0392b"/><text x="31.500" y="29.300" font-family="Liberation Sans,sans-serif" font-size="6" font-weight="bold" fill="#7b8088" text-anchor="middle">3D</text></svg>
<svg style="left:398px;top:747px" width="40" height="40" viewBox="0 0 40 40" ><circle cx="20" cy="20" r="19.900" fill="#f5f5f7"/><rect x="15.800" y="3.800" width="8.400" height="15" rx="4.200" fill="#f5a02a" fill-opacity=".85" transform="rotate(0 20 20)"/><rect x="15.800" y="3.800" width="8.400" height="15" rx="4.200" fill="#f2e03a" fill-opacity=".85" transform="rotate(45 20 20)"/><rect x="15.800" y="3.800" width="8.400" height="15" rx="4.200" fill="#a8d14b" fill-opacity=".85" transform="rotate(90 20 20)"/><rect x="15.800" y="3.800" width="8.400" height="15" rx="4.200" fill="#5cc48a" fill-opacity=".85" transform="rotate(135 20 20)"/><rect x="15.800" y="3.800" width="8.400" height="15" rx="4.200" fill="#6db3ea" fill-opacity=".85" transform="rotate(180 20 20)"/><rect x="15.800" y="3.800" width="8.400" height="15" rx="4.200" fill="#a78cd8" fill-opacity=".85" transform="rotate(225 20 20)"/><rect x="15.800" y="3.800" width="8.400" height="15" rx="4.200" fill="#e08bb0" fill-opacity=".85" transform="rotate(270 20 20)"/><rect x="15.800" y="3.800" width="8.400" height="15" rx="4.200" fill="#f0604a" fill-opacity=".85" transform="rotate(315 20 20)"/><circle cx="20" cy="20" r="1.200" fill="#fff"/></svg>
<svg style="left:450px;top:745px" width="37" height="42" viewBox="0 0 37 42" ><g transform="rotate(-3 18 21)"><rect x="29" y="5" width="6" height="8" rx="1" fill="#c9c9c9"/><rect x="29" y="13" width="6" height="8" rx="1" fill="#69b7e8"/><rect x="29" y="21" width="6" height="8" rx="1" fill="#7ccf6b"/><rect x="29" y="29" width="6" height="8" rx="1" fill="#f2a33a"/><path d="M3 6l27-3.500a2 2 0 0 1 2 2V38a2 2 0 0 1-2 2H5a2 2 0 0 1-2-2z" fill="#b5803f"/><path d="M3 6l27-3.500a2 2 0 0 1 2 2V8L3 10z" fill="#c48f4b"/><circle cx="17.500" cy="21" r="9" fill="none" stroke="#9c6c33" stroke-width="1.200"/><circle cx="17.500" cy="18" r="3.300" fill="#9c6c33"/><path d="M11 26.500c1.500-3.500 11.500-3.500 13 0a9 9 0 0 1-13 0z" fill="#9c6c33"/></g></svg>
<svg style="left:500px;top:745px" width="37" height="43" viewBox="0 0 37 43" ><g transform="rotate(-4 18 21)"><rect x="3" y="3" width="31" height="37" rx="4" fill="#fbfbfb" stroke="#d9dbde" stroke-width=".8"/><circle cx="9" cy="11" r="2.600" fill="#3b82f6"/><circle cx="9" cy="18.500" r="2.600" fill="#e04a3a"/><circle cx="9" cy="26" r="2.600" fill="#e59a3c"/><circle cx="9" cy="33.500" r="2.600" fill="#3d4148"/><path d="M14 11h16M14 18.500h16M14 26h16M14 33.500h16" stroke="#d0d3d7" stroke-width="1"/></g></svg>
<svg style="left:549px;top:747px" width="38" height="40" viewBox="0 0 38 40" ><path d="M2 6h34v30l-2 2H4l-2-2z" fill="#7d838b"/><rect x="3" y="2" width="32" height="33" rx="2.500" fill="#fafafa"/><path d="M3 4.500A2.500 2.500 0 0 1 5.500 2h27A2.500 2.500 0 0 1 35 4.500V12H3z" fill="#e8453c"/><text x="19" y="10.300" font-family="Liberation Sans,sans-serif" font-size="8" fill="#fff" text-anchor="middle">JAN</text><text x="19" y="31" font-family="Liberation Sans,sans-serif" font-size="21" fill="#2a2a2a" text-anchor="middle">8</text></svg>
<svg style="left:599px;top:745px" width="38" height="43" viewBox="0 0 38 43" ><g transform="rotate(-3 19 21)"><rect x="3" y="2" width="32" height="39" rx="1.500" fill="#fdfbe9" stroke="#e6e0bf" stroke-width=".6"/><path d="M3 3.500A1.500 1.500 0 0 1 4.500 2h29A1.500 1.500 0 0 1 35 3.500V10H3z" fill="#f8cf3c"/><path d="M3 14h31" stroke="#e3dcb5" stroke-width=".8"/><path d="M3 17h31" stroke="#e3dcb5" stroke-width=".8"/><path d="M3 20h31" stroke="#e3dcb5" stroke-width=".8"/><path d="M3 23h31" stroke="#e3dcb5" stroke-width=".8"/><path d="M3 26h31" stroke="#e3dcb5" stroke-width=".8"/><path d="M3 29h31" stroke="#e3dcb5" stroke-width=".8"/><path d="M3 32h31" stroke="#e3dcb5" stroke-width=".8"/><path d="M3 35h31" stroke="#e3dcb5" stroke-width=".8"/><path d="M3 38h31" stroke="#e3dcb5" stroke-width=".8"/></g></svg>
<svg style="left:647px;top:747px" width="40" height="40" viewBox="0 0 40 40" ><defs><linearGradient id="mu" x1="0" y1="0" x2="1" y2="1"><stop offset="0" stop-color="#f8496b"/><stop offset=".5" stop-color="#b55bd8"/><stop offset="1" stop-color="#35a8f5"/></linearGradient></defs><circle cx="20" cy="20" r="19.700" fill="#f4f4f6" stroke="#dfe1e5" stroke-width=".6"/><path d="M16 10.500l12-2.500v16.500a3.500 3.500 0 1 1-2.200-3.200V12.500l-7.600 1.600v12.400a3.500 3.500 0 1 1-2.200-3.200z" fill="url(#mu)"/></svg>
<svg style="left:698px;top:747px" width="40" height="40" viewBox="0 0 40 40" ><defs><linearGradient id="pc" x1="0" y1="0" x2="0" y2="1"><stop offset="0" stop-color="#c65cf0"/><stop offset="1" stop-color="#8a2fc2"/></linearGradient></defs><circle cx="20" cy="20" r="19.700" fill="url(#pc)"/><circle cx="20" cy="18" r="11" fill="none" stroke="#fff" stroke-width="2.200" stroke-dasharray="52 17.100" transform="rotate(128 20 18)"/><circle cx="20" cy="18" r="6.300" fill="none" stroke="#fff" stroke-width="2.200" stroke-dasharray="29 10.600" transform="rotate(125 20 18)"/><circle cx="20" cy="17.500" r="2.800" fill="#fff"/><path d="M17.500 23.500a2.500 2.500 0 0 1 5 0l-.8 8.500a1.700 1.700 0 0 1-3.400 0z" fill="#fff"/></svg>
<svg style="left:747px;top:747px" width="40" height="40" viewBox="0 0 40 40" ><circle cx="20" cy="20" r="19.800" fill="#151515"/><path d="M14.800 19.300c0-1.700 1.400-2.500 1.500-2.600-.8-1.200-2.100-1.300-2.500-1.300-1.100-.1-2.100.6-2.600.6s-1.400-.6-2.300-.6c-1.200 0-2.300.7-2.900 1.800-1.200 2.100-.3 5.300.9 7 .6.800 1.300 1.800 2.200 1.700.9 0 1.200-.6 2.300-.6s1.300.6 2.300.5c.9 0 1.500-.8 2.100-1.700.7-1 .9-1.900 1-2-.1 0-1.900-.7-2-2.800zM13.100 14.200c.5-.6.800-1.400.7-2.200-.7 0-1.500.5-2 1.100-.4.500-.8 1.300-.7 2.100.8.100 1.600-.4 2-1z" fill="#fff"/><text x="26.500" y="26" font-family="Liberation Sans,sans-serif" font-size="13.500" font-weight="bold" fill="#fff" text-anchor="middle">tv</text></svg>
<svg style="left:797px;top:747px" width="41" height="40" viewBox="0 0 41 40" ><defs><linearGradient id="as" x1="0" y1="0" x2="0" y2="1"><stop offset="0" stop-color="#2ab1fb"/><stop offset="1" stop-color="#1c6ff0"/></linearGradient></defs><circle cx="20.500" cy="20" r="19.800" fill="url(#as)"/><path d="M22.500 9L12 27.500M18.500 9L29 27.500M8.500 23.500h24" fill="none" stroke="#fff" stroke-width="3" stroke-linecap="round"/><path d="M11 29.500l-1.200 2M30 29.500l1.200 2" stroke="#fff" stroke-width="3" stroke-linecap="round"/></svg>
<svg style="left:848px;top:748px" width="38" height="38" viewBox="0 0 38 38" ><rect width="38" height="38" rx="8" fill="#f8f8f8"/><circle cx="19" cy="19" r="14.500" fill="#fbbc05"/><path d="M19 19L6.440 11.750A14.500 14.500 0 0 1 31.560 11.750z" fill="#ea4335"/><path d="M19 4.500a14.500 14.500 0 0 1 12.560 7.250H19z" fill="#ea4335"/><path d="M6.440 11.750A14.500 14.500 0 0 0 19 33.500L25.500 22.500 19 19z" fill="#34a853"/><path d="M6.440 11.750L13 23l6-4z" fill="#34a853"/><path d="M31.560 11.750H19l6.300 11L19 33.500a14.500 14.500 0 0 0 12.560-21.750z" fill="#fbbc05"/><circle cx="19" cy="19" r="6.800" fill="#fff"/><circle cx="19" cy="19" r="5.300" fill="#4285f4"/></svg>
<svg style="left:897px;top:749px" width="40" height="36" viewBox="0 0 40 36" ><rect x="0" y="0" width="38" height="36" rx="3" fill="#8b9096"/><rect x="0" y="0" width="38" height="36" rx="3" fill="none" stroke="#a5aab0" stroke-width="1"/><rect x="17.800" y="2.500" width="2.400" height="4" fill="#3a3d42" transform="rotate(0 19 18)"/><rect x="17.800" y="2.500" width="2.400" height="4" fill="#3a3d42" transform="rotate(15 19 18)"/><rect x="17.800" y="2.500" width="2.400" height="4" fill="#3a3d42" transform="rotate(30 19 18)"/><rect x="17.800" y="2.500" width="2.400" height="4" fill="#3a3d42" transform="rotate(45 19 18)"/><rect x="17.800" y="2.500" width="2.400" height="4" fill="#3a3d42" transform="rotate(60 19 18)"/><rect x="17.800" y="2.500" width="2.400" height="4" fill="#3a3d42" transform="rotate(75 19 18)"/><rect x="17.800" y="2.500" width="2.400" height="4" fill="#3a3d42" transform="rotate(90 19 18)"/><rect x="17.800" y="2.500" width="2.400" height="4" fill="#3a3d42" transform="rotate(105 19 18)"/><rect x="17.800" y="2.500" width="2.400" height="4" fill="#3a3d42" transform="rotate(120 19 18)"/><rect x="17.800" y="2.500" width="2.400" height="4" fill="#3a3d42" transform="rotate(135 19 18)"/><rect x="17.800" y="2.500" width="2.400" height="4" fill="#3a3d42" transform="rotate(150 19 18)"/><rect x="17.800" y="2.500" width="2.400" height="4" fill="#3a3d42" transform="rotate(165 19 18)"/><rect x="17.800" y="2.500" width="2.400" height="4" fill="#3a3d42" transform="rotate(180 19 18)"/><rect x="17.800" y="2.500" width="2.400" height="4" fill="#3a3d42" transform="rotate(195 19 18)"/><rect x="17.800" y="2.500" width="2.400" height="4" fill="#3a3d42" transform="rotate(210 19 18)"/><rect x="17.800" y="2.500" width="2.400" height="4" fill="#3a3d42" transform="rotate(225 19 18)"/><rect x="17.800" y="2.500" width="2.400" height="4" fill="#3a3d42" transform="rotate(240 19 18)"/><rect x="17.800" y="2.500" width="2.400" height="4" fill="#3a3d42" transform="rotate(255 19 18)"/><rect x="17.800" y="2.500" width="2.400" height="4" fill="#3a3d42" transform="rotate(270 19 18)"/><rect x="17.800" y="2.500" width="2.400" height="4" fill="#3a3d42" transform="rotate(285 19 18)"/><rect x="17.800" y="2.500" width="2.400" height="4" fill="#3a3d42" transform="rotate(300 19 18)"/><rect x="17.800" y="2.500" width="2.400" height="4" fill="#3a3d42" transform="rotate(315 19 18)"/><rect x="17.800" y="2.500" width="2.400" height="4" fill="#3a3d42" transform="rotate(330 19 18)"/><rect x="17.800" y="2.500" width="2.400" height="4" fill="#3a3d42" transform="rotate(345 19 18)"/><circle cx="19" cy="18" r="12.500" fill="none" stroke="#3a3d42" stroke-width="3.500"/><circle cx="19" cy="18" r="9" fill="#9ea3a9"/><path d="M19 18V8M19 18l8.700 5M19 18l-8.700 5" stroke="#3a3d42" stroke-width="3"/><circle cx="19" cy="18" r="2.500" fill="#3a3d42"/></svg>
<div class="abs" style="left:925.5px;top:746px;width:14px;height:14px;border-radius:50%;background:#f2463d"></div>
<div class="t" style="top:748.67px;font-size:9.5px;color:#fff;font-weight:bold;left:929.85px;transform-origin:50% 50%;">1</div>
<div class="abs" style="left:952.8px;top:746px;width:1.2px;height:46px;background:#2b4058"></div>
<div class="abs" style="left:1125px;top:746px;width:1.2px;height:46px;background:#2b4058"></div>
<svg style="left:968px;top:746px" width="43" height="42" viewBox="0 0 43 42" ><defs><radialGradient id="qt" cx=".5" cy=".4" r=".6"><stop offset="0" stop-color="#4fc3ff"/><stop offset="1" stop-color="#1565d8"/></radialGradient></defs><circle cx="20" cy="20" r="19.500" fill="#4a4f57"/><circle cx="20" cy="20" r="19.500" fill="none" stroke="#6b7079" stroke-width="1"/><circle cx="20" cy="20" r="12.500" fill="url(#qt)"/><path d="M22 23l14 14" stroke="#3d4149" stroke-width="7" stroke-linecap="round"/></svg>
<svg style="left:1020px;top:748px" width="38" height="38" viewBox="0 0 38 38" ><rect width="38" height="38" rx="8" fill="#fdfdfd"/><rect x="12" y="6" width="20" height="26" rx="1.500" fill="#21a366"/><rect x="22" y="6" width="10" height="8.700" fill="#33c481"/><rect x="12" y="14.700" width="10" height="8.700" fill="#107c41"/><rect x="22" y="14.700" width="10" height="8.700" fill="#21a366"/><rect x="12" y="23.300" width="20" height="8.700" rx="1.500" fill="#185c37"/><rect x="22" y="23.300" width="10" height="8.700" fill="#107c41"/><rect x="4" y="11.500" width="15" height="15" rx="1.500" fill="#107c41"/><text x="11.500" y="23.300" font-family="Liberation Sans,sans-serif" font-size="11" font-weight="bold" fill="#fff" text-anchor="middle">X</text></svg>
<svg style="left:1067px;top:747px" width="44" height="40" viewBox="0 0 44 40" ><g transform="rotate(6 20 14)"><rect x="7" y="1" width="31" height="24" fill="#c9ad7c" stroke="#f3f3f3" stroke-width="1.500"/></g><g transform="rotate(-8 18 20)"><rect x="2" y="7" width="33" height="27" fill="#fafafa"/><rect x="4" y="9" width="29" height="23" fill="#6ea4dc"/><path d="M4 22c6-2 12 1 16 0s8-1 13 1v9H4z" fill="#e9eef2"/><path d="M4 27c8-3 18 2 29-1v6H4z" fill="#3c6fa8"/></g><circle cx="34.500" cy="23" r="7" fill="#c8ccd0" fill-opacity=".75" stroke="#4b4f56" stroke-width="2"/><rect x="28.500" y="28" width="12" height="11" rx="2" fill="#4b4f56"/></svg>
<svg style="left:1138px;top:754px" width="46" height="34" viewBox="0 0 46 34" ><rect x="0" y="0" width="44.500" height="25" fill="#f2f2f2"/><rect x="0" y="0" width="44.500" height="2.600" fill="#a3262b"/><rect x="0" y="2.600" width="18" height="22.400" fill="#fbfbfb"/><path d="M2 6h13M2 9.500h13M2 13h13M2 16.500h13M2 20h13" stroke="#dcc5c6" stroke-width="1.200"/><rect x="19" y="3.500" width="11" height="21" fill="#e3ebe3"/><rect x="31" y="3.500" width="13" height="21" fill="#f7f7f7"/><rect x="32" y="11" width="11" height="2.500" fill="#69b37c"/><rect x="32" y="16" width="11" height="2" fill="#d5d5d5"/><rect x="29.500" y="20.500" width="13.500" height="13.500" rx="3" fill="#f8f8f8"/><circle cx="36.250" cy="27.250" r="5" fill="#fbbc05"/><path d="M36.250 27.250L31.920 24.750A5 5 0 0 1 40.580 24.750z" fill="#ea4335"/><path d="M31.920 24.750A5 5 0 0 0 36.250 32.250L38.500 28.500 36.250 27.250z" fill="#34a853"/><circle cx="36.250" cy="27.250" r="2.300" fill="#fff"/><circle cx="36.250" cy="27.250" r="1.800" fill="#4285f4"/></svg>
<svg style="left:1194px;top:745px" width="35" height="43" viewBox="0 0 35 43" ><path d="M2 9h31l-3.500 31a2.500 2.500 0 0 1-2.500 2H8a2.500 2.500 0 0 1-2.500-2z" fill="#e4e8ec" fill-opacity=".88"/><path d="M9 9l2 33M17.500 9v33M26 9l-2 33" stroke="#cfd4d9" stroke-width="1"/><ellipse cx="17.500" cy="9" rx="15.500" ry="3.500" fill="#f4f6f8" stroke="#c5cad0" stroke-width=".8"/><path d="M7 8l4-5 5 3 4-4 5 4 4-2 1 4c-6 2.500-17 2.500-23 0z" fill="#d6d2c8"/><path d="M11 4l4 2 2 1M20 3l3 3M25 5l-2 2" stroke="#8b8f96" stroke-width="1"/><rect x="13" y="2" width="5" height="4" fill="#5e7fa8"/><rect x="21" y="3" width="4" height="3" fill="#b35a4a"/></svg>
<div class="abs" style="left:66.9px;top:794px;width:4px;height:4px;border-radius:50%;background:#0b0f14"></div>
<div class="abs" style="left:864.9px;top:794px;width:4px;height:4px;border-radius:50%;background:#0b0f14"></div>
</div></div>
</body></html>
